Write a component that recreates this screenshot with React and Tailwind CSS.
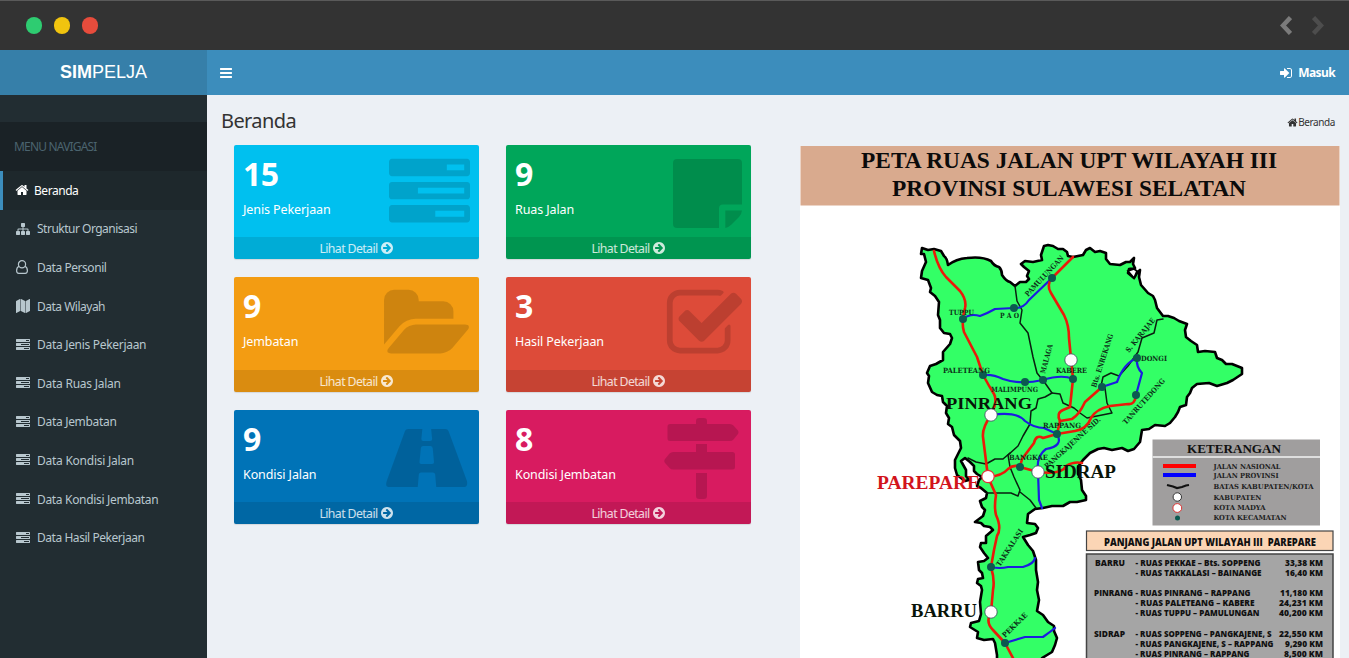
import React from "react";

const P = {
  tasks: "M1024 1408h640v-128h-640v128zm-384-512h1024v-128h-1024v128zm640-512h384v-128h-384v128zm512 832v256q0 26-19 45t-45 19h-1664q-26 0-45-19t-19-45v-256q0-26 19-45t45-19h1664q26 0 45 19t19 45zm0-512v256q0 26-19 45t-45 19h-1664q-26 0-45-19t-19-45v-256q0-26 19-45t45-19h1664q26 0 45 19t19 45zm0-512v256q0 26-19 45t-45 19h-1664q-26 0-45-19t-19-45v-256q0-26 19-45t45-19h1664q26 0 45 19t19 45z",
  home: "M1472 992v480q0 26-19 45t-45 19h-384v-384h-256v384h-384q-26 0-45-19t-19-45v-480q0-1 .5-3t.5-3l575-474 575 474q1 2 1 6zm223-69l-62 74q-8 9-21 11h-3q-13 0-21-7l-692-577-692 577q-12 8-24 7-13-2-21-11l-62-74q-8-10-7-23.5t11-21.5l719-599q32-26 76-26t76 26l244 204v-195q0-14 9-23t23-9h192q14 0 23 9t9 23v408l219 182q10 8 11 21.5t-7 23.5z",
  bars: "M1664 1344v128q0 26-19 45t-45 19h-1408q-26 0-45-19t-19-45v-128q0-26 19-45t45-19h1408q26 0 45 19t19 45zm0-512v128q0 26-19 45t-45 19h-1408q-26 0-45-19t-19-45v-128q0-26 19-45t45-19h1408q26 0 45 19t19 45zm0-512v128q0 26-19 45t-45 19h-1408q-26 0-45-19t-19-45v-128q0-26 19-45t45-19h1408q26 0 45 19t19 45z",
  sitemap: "M1792 1248v320q0 40-28 68t-68 28h-320q-40 0-68-28t-28-68v-320q0-40 28-68t68-28h96v-192h-512v192h96q40 0 68 28t28 68v320q0 40-28 68t-68 28h-320q-40 0-68-28t-28-68v-320q0-40 28-68t68-28h96v-192h-512v192h96q40 0 68 28t28 68v320q0 40-28 68t-68 28h-320q-40 0-68-28t-28-68v-320q0-40 28-68t68-28h96v-192q0-52 38-90t90-38h512v-192h-96q-40 0-68-28t-28-68v-320q0-40 28-68t68-28h320q40 0 68 28t28 68v320q0 40-28 68t-68 28h-96v192h512q52 0 90 38t38 90v192h96q40 0 68 28t28 68z",
  map: "M512 0q13 0 22.5 9.5t9.5 22.5v1472q0 20-17 28l-480 256q-7 4-15 4-13 0-22.5-9.5t-9.5-22.5v-1472q0-20 17-28l480-256q7-4 15-4zm1248 0q13 0 22.5 9.5t9.5 22.5v1472q0 20-17 28l-480 256q-7 4-15 4-13 0-22.5-9.5t-9.5-22.5v-1472q0-20 17-28l480-256q7-4 15-4zm-1120 0q8 0 14 3l512 256q18 10 18 29v1472q0 13-9.5 22.5t-22.5 9.5q-8 0-14-3l-512-256q-18-10-18-29v-1472q0-13 9.5-22.5t22.5-9.5z",
  folder: "M1815 952q0 31-31 66l-336 396q-43 51-120.5 86.5t-143.5 35.5h-1088q-34 0-60.5-13t-26.5-43q0-31 31-66l336-396q43-51 120.5-86.5t143.5-35.5h1088q34 0 60.5 13t26.5 43zm-343-344v160h-832q-94 0-197 47.5t-164 119.5l-337 396-5 6q0-4-.5-12.5t-.5-12.5v-960q0-92 66-158t158-66h320q92 0 158 66t66 158v32h544q92 0 158 66t66 158z",
  check: "M1472 930v318q0 119-84.5 203.5t-203.5 84.5h-832q-119 0-203.5-84.5t-84.5-203.5v-832q0-119 84.5-203.5t203.5-84.5h832q63 0 117 25 15 7 18 23 3 17-9 29l-49 49q-10 10-23 10-3 0-9-2-23-6-45-6h-832q-66 0-113 47t-47 113v832q0 66 47 113t113 47h832q66 0 113-47t47-113v-254q0-13 9-22l64-64q10-10 23-10 6 0 12 3 20 8 20 29zm231-489l-814 814q-24 24-57 24t-57-24l-430-430q-24-24-24-57t24-57l110-110q24-24 57-24t57 24l263 263 647-647q24-24 57-24t57 24l110 110q24 24 24 57t-24 57z",
  arrow: "M1413 896q0-27-18-45l-91-91-362-362q-18-18-45-18t-45 18l-91 91q-18 18-18 45t18 45l189 189h-502q-26 0-45 19t-19 45v128q0 26 19 45t45 19h502l-189 189q-19 19-19 45t19 45l91 91q18 18 45 18t45-18l362-362 91-91q18-18 18-45zm251 0q0 209-103 385.5t-279.5 279.5-385.5 103-385.5-103-279.5-279.5-103-385.5 103-385.5 279.5-279.5 385.5-103 385.5 103 279.5 279.5 103 385.5z",
  signin: "M1312 896q0 26-19 45l-544 544q-19 19-45 19t-45-19-19-45v-288h-448q-26 0-45-19t-19-45v-384q0-26 19-45t45-19h448v-288q0-26 19-45t45-19 45 19l544 544q19 19 19 45zm352-352v704q0 119-84.5 203.5t-203.5 84.5h-320q-13 0-22.5-9.5t-9.5-22.5q0-4-1-20t-.5-26.5 3-23.5 10-19.5 20.5-6.5h320q66 0 113-47t47-113v-704q0-66-47-113t-113-47h-312l-11.5-1-11.5-3-8-5.5-7-9-2-13.5q0-4-1-20t-.5-26.5 3-23.5 10-19.5 20.5-6.5h320q119 0 203.5 84.5t84.5 203.5z",
};

function Icon({ d, className, box = "0 0 1792 1792" }) {
  return (
    <svg viewBox={box} className={className} fill="currentColor">
      <path d={d} />
    </svg>
  );
}

function UserOutline() {
  return (
    <svg viewBox="0 0 13 14" className="h-[14px] w-[13px]" fill="none" stroke="currentColor" strokeWidth="1.2">
      <circle cx="6" cy="4.300" r="3.600" />
      <path d="M3 6.300C1.200 7 .6 8.900 .6 10.800 .6 12.400 1.500 13.300 2.800 13.300h6.400c1.300 0 2.200-.9 2.200-2.500 0-1.900-.6-3.800-2.400-4.500" />
    </svg>
  );
}

const tasks = <Icon d={P.tasks} className="h-[14px] w-[14px]" />;
const menu = [
  ["Struktur Organisasi", <Icon d={P.sitemap} className="h-[14px] w-[14px]" />, "tracking-[-0.5px]"],
  ["Data Personil", <UserOutline />, "tracking-[-0.45px]"],
  ["Data Wilayah", <Icon d={P.map} className="h-[14px] w-[14px]" />, "tracking-[-0.5px]"],
  ["Data Jenis Pekerjaan", tasks, "tracking-[-0.3px]"],
  ["Data Ruas Jalan", tasks, "tracking-[-0.25px]"],
  ["Data Jembatan", tasks, "tracking-[-0.3px]"],
  ["Data Kondisi Jalan", tasks, "tracking-[-0.25px]"],
  ["Data Kondisi Jembatan", tasks, "tracking-[-0.32px]"],
  ["Data Hasil Pekerjaan", tasks, "tracking-[-0.45px]"],
];

const cards = [
  ["15", "Jenis Pekerjaan", "bg-[#00c0ef]", <Icon d={P.tasks} className="h-[81px] w-[81px]" />, "right-[9px] top-[7.5px]"],
  ["9", "Ruas Jalan", "bg-[#00a65a]",
    <svg viewBox="0 0 69 69" className="h-[69px] w-[69px]" fill="currentColor">
      <path d="M4 0H65Q69 0 69 4V45.500H50Q46 45.500 46 49.500V69H4Q0 69 0 65V4Q0 0 4 0Z" />
      <path d="M52.300 51.500H69Q68.500 55.500 66 58L58.500 65.500Q55.500 68.500 52.300 69Z" />
    </svg>, "right-[9px] top-[13.5px]"],
  ["9", "Jembatan", "bg-[#f39c12]", <Icon d={P.folder} box="-64 0 1880 1792" className="h-[81px] w-[85px]" />, "right-[10.5px] top-[7px]"],
  ["3", "Hasil Pekerjaan", "bg-[#dd4b39]", <Icon d={P.check} className="h-[81px] w-[81px]" />, "right-[6px] top-[7px]"],
  ["9", "Kondisi Jalan", "bg-[#0073b7]",
    <svg viewBox="0 0 80 58" preserveAspectRatio="none" className="h-[58px] w-[82px]" fill="currentColor">
      <path fillRule="evenodd" d="M21.500 0H35.500L34.500 10Q34.500 12 36.500 12H43Q45 12 45 10L44 0H58Q60.200 0 61 2L79 52Q80 58 76.500 58H49L48 46Q48 43.500 45.500 43.500H34.500Q32 43.500 32 46L31 58H2.500Q-1 58 .7 52L18.500 2Q19.300 0 21.500 0ZM36 17Q34 17 34 19.500L32.700 33Q32.500 35 34.500 35H45Q47 35 46.800 33L45.600 19.500Q45.400 17 43.500 17Z" />
    </svg>, "right-[11px] top-[19px]"],
  ["8", "Kondisi Jembatan", "bg-[#d81b60]",
    <svg viewBox="0 0 75 81" className="h-[81px] w-[75px]" fill="currentColor">
      <path d="M6 6H32V3Q32 0 35 0H40Q43 0 43 3V6H66Q68 6 69.500 7.500L74 12.500Q75 14.500 74 16L69.500 21.500Q68 23 66 23H6Q3.500 23 3.500 20.500V8.500Q3.500 6 6 6ZM32 26H43V34H68.500Q71 34 71 36.500V49Q71 51.500 68.500 51.500H9Q7 51.500 5.500 50L1 45Q-.5 43 1 41L5.500 35.500Q7 34 9 34H32ZM32 55H43V78Q43 81 40 81H35Q32 81 32 78Z" />
    </svg>, "right-[12px] top-[8px]"],
];

function Card({ c }) {
  return (
    <div className={"relative flex w-[245px] flex-col rounded-[2px] text-white shadow-[0_1px_1px_rgba(0,0,0,0.1)] " + c[2]}>
      <div className={"absolute text-black/15 " + c[4]}>{c[3]}</div>
      <div className="flex-1 pl-[9px] pt-[9px]">
        <div className="text-[32px] font-bold leading-[40px] tracking-[-0.5px]">{c[0]}</div>
        <div className="mt-[7px] text-[12.500px] leading-[18px] tracking-[-0.1px]">{c[1]}</div>
      </div>
      <div className="flex h-[22px] items-center justify-center gap-[2px] rounded-b-[2px] bg-black/10 text-[12.300px] tracking-[-0.6px] text-white/80">
        <span className="pt-[2px]">Lihat Detail</span>
        <Icon d={P.arrow} className="h-[14px] w-[14px]" />
      </div>
    </div>
  );
}

const LAND =
  "M922 248L928 250L934 249L941 251L944 256Q947 258 948 265Q956 259 967 258Q982 256 991 261Q994 266 999 267Q1002 270 1002 275Q1006 281 1010 282L1015 286L1020 282L1026 282L1029 279L1027 276L1029 271L1024 267L1021 264L1025 261L1033 262L1042 260L1041 255L1044 246L1048 245L1053 246L1058 249L1063 249L1067 252L1068 256L1073 257L1083 255L1086 250L1090 248L1095 252L1100 251L1106 253L1106 259L1110 264L1120 265L1126 262L1130 262L1134 258L1133 264L1135 268L1129 269L1128 273L1134 278L1137 273L1140 270L1139 277L1141 285L1148 293L1153 296L1155 300L1157 308L1163 316L1168 316L1174 318L1179 321L1187 324L1185 330L1186 337L1191 341L1197 345L1198 352L1205 351L1215 352L1217 358L1222 360L1226 364L1232 364L1242 368L1242 374L1233 380L1227 383L1217 386L1209 383L1197 384L1192 388L1190 393L1187 397L1186 405L1180 407L1178 412L1175 417L1170 423L1165 426L1155 425L1149 429L1142 430L1140 442L1134 449L1128 451L1122 448L1112 450L1104 448L1098 449L1090 453L1083 460L1078 467L1078 474L1081 480L1082 490L1086 496L1086 500L1077 502L1070 502L1063 506L1052 506L1043 508L1035 509L1028 514L1027 523L1035 524L1038 528L1036 533L1030 535L1023 537L1028 545L1033 551L1036 560L1036 570L1038 582L1037 590L1039 600L1037 611L1043 615L1048 622L1054 626L1054 631L1057 638L1055 645L1052 652L1042 658L1042 664H997L997 655L995 643L993 639L984 640L977 638L978 632L970 627L971 623L979 621L981 614L980 602L982 590L981 586L977 583L978 579L983 578L982 573L979 570L978 562L984 561L988 558L984 553L980 547L981 543L986 543L986 536L993 530L990 527L984 526L981 523L975 522L983 516L985 510L982 507L980 501L986 498L987 493L981 488L977 486L979 480L982 477L977 474L974 471L974 466L970 462L965 458L961 461L966 470L966 476L969 480L965 481L957 475L955 468L955 460L961 448L960 441L954 435L952 427L948 424L949 418L946 413L947 406L943 402L942 396L937 395L932 392L928 383L929 376L927 373L930 366L936 364L943 360L943 352L950 344L952 338L950 334L944 333L940 328L940 320L938 315L939 302L935 296L930 292L931 288L928 280L921 278L922 271L926 262L924 254L921 254Z";

const THIN = [
  "M1015 286L1017 301L1022 310L1020 323L1028 333L1033 357L1037 373L1045 383L1052 393L1045 397L1038 399L1036 408L1031 411L1030 424L1023 436L1018 446L1008 455L1010 467",
  "M1052 393L1060 394L1063 403L1074 408L1080 413L1087 418L1102 415L1112 413L1107 403L1105 388",
  "M968 458L976 462L986 464L995 459L1003 459L1010 453M1010 467L1014 477L1020 490L1018 496L1011 493L987 493M1020 492L1030 500L1036 508",
  "M1163 319L1157 320L1154 333L1142 338L1138 352L1128 366L1119 376L1111 373L1103 377L1101 386",
];
const RED = [
  "M934 251Q938 268 946 277L960 291Q967 300 965 308Q961 322 964 332L977 357L983 375Q989 386 994 394Q998 401 991 415Q982 428 983 437L988 477L996 495Q994 507 996 515Q1002 528 997 536L994 550L991 567Q995 580 993 590L991 612Q985 622 993 630L1005 643L1013 658",
  "M1073 257L1052 278Q1046 285 1051 293L1064 315Q1069 325 1069 338L1073 379L1070 407L1063 410Q1056 413 1060 421L1057 434",
  "M1102 387L1085 402Q1079 415 1072 419L1060 421",
  "M1136 395Q1135 405 1128 404L1110 406Q1096 409 1091 418Q1087 429 1075 431L1057 434L1043 438Q1036 434 1034 443L1022 459L1020 467",
  "M988 477Q1002 476 1008 469Q1014 464 1020 467L1038 472Q1062 475 1066 466Q1074 461 1082 463",
];
const BLUE = [
  "M963 319Q970 313 980 316Q988 313 995 309L1014 308Q1023 309 1029 300L1052 278",
  "M983 375Q993 374 1003 379Q1020 385 1043 380Q1062 374 1073 379",
  "M991 415Q1017 411 1025 421Q1034 428 1044 428L1057 434Q1064 446 1046 449Q1036 456 1038 472L1039 500L1042 508",
  "M1102 387L1117 382Q1124 363 1137 358Q1136 367 1142 373L1136 395",
  "M991 567Q1000 569 1008 567L1023 567Q1034 564 1035 558",
  "M1005 643L1025 637L1043 637Q1050 632 1055 628",
];
const TOWNS = [[963, 319], [1014, 308], [1052, 278], [983, 375], [1025, 382], [1043, 380], [1073, 379], [1102, 387], [1137, 358], [1136, 395], [1057, 434], [1020, 467], [991, 567], [1005, 643]];
const CITIES = [[991, 415], [1071, 360], [1038, 472], [991, 612]];
// text, x, y, width, size, rotation
const LABELS = [
  ["TUPPU", 949, 315, 25, 7.2, 0], ["P A O", 1000, 317.5, 19, 7.2, 0], ["PALETEANG", 943, 373, 47, 7.2, 0],
  ["MALIMPUNG", 991, 392, 47, 7.2, 0], ["KABERE", 1056, 372.5, 31, 7.2, 0], ["DONGI", 1141, 361, 26, 7.2, 0],
  ["RAPPANG", 1043, 428, 38, 7.2, 0], ["BANGKAE", 1009, 460, 39, 7.2, 0],
  ["PAMULUNGAN", 1028, 297, 53, 7.2, -47], ["MALAGA", 1045, 374, 30, 7.2, -75],
  ["Bts. ENREKANG", 1096, 388, 56, 7.2, -72], ["S. KARAJAE", 1129, 353, 42, 7.2, -51],
  ["TANRUTEDONG", 1126, 425, 59, 7.2, -48], ["PANGKAJENNE SID.", 1047, 469, 73, 7.2, -42],
  ["TAKKALASI", 1000, 567, 43, 7.2, -57], ["PEKKAE", 1005, 638, 32, 7.2, -44],
];
const LEGEND = [["JALAN NASIONAL", 468.5, 67], ["JALAN PROVINSI", 477.5, 65], ["BATAS KABUPATEN/KOTA", 488.5, 100], ["KABUPATEN", 499.5, 48], ["KOTA MADYA", 509.5, 52], ["KOTA KECAMATAN", 519.5, 73]];
const ROWS = [
  ["- RUAS PEKKAE – Bts. SOPPENG", 565.5, 125, "33,38 KM", 38], ["- RUAS TAKKALASI – BAINANGE", 576, 126, "16,40 KM", 38],
  ["- RUAS PINRANG – RAPPANG", 596, 115, "11,180 KM", 43], ["- RUAS PALETEANG – KABERE", 606, 119, "24,231 KM", 44], ["- RUAS TUPPU – PAMULUNGAN", 616, 124, "40,200 KM", 44],
  ["- RUAS SOPPENG – PANGKAJENE, S", 636.5, 136, "22,550 KM", 44], ["- RUAS PANGKAJENE, S – RAPPANG", 646.5, 138, "9,290 KM", 38], ["- RUAS PINRANG – RAPPANG", 656.5, 114, "8,500 KM", 39],
];

function T({ x, y, w, s, children, ...rest }) {
  return <text x={x} y={y} fontSize={s} textLength={w} lengthAdjust="spacingAndGlyphs" fontWeight="700" {...rest}>{children}</text>;
}

function RoadMap() {
  return (
    <svg viewBox="800 146 540 512" className="block h-[512px] w-[540px] bg-white font-['Liberation_Serif',serif]">
      <rect x="800.500" y="146" width="539" height="59.500" fill="#d9aa8e" />
      <T x="861" y="168" w="416" s="23" fill="#0b0b0b">PETA RUAS JALAN UPT WILAYAH III</T>
      <T x="892" y="196" w="354" s="23" fill="#0b0b0b">PROVINSI SULAWESI SELATAN</T>
      <path d={LAND} fill="#33ff66" stroke="#000" strokeWidth="2.600" strokeLinejoin="round" />
      <path d="M1128 271L1134 269L1137 271L1134 278Z" fill="#fff" stroke="#000" strokeWidth="1.800" />
      <g fill="none" strokeLinejoin="round" strokeLinecap="round">
        <g stroke="#0a1f10" strokeWidth="1.500">{THIN.map((d) => <path key={d} d={d} />)}</g>
        <g stroke="#1c1ce0" strokeWidth="2.200">{BLUE.map((d) => <path key={d} d={d} />)}</g>
        <g stroke="#ea1a0a" strokeWidth="2.600">{RED.map((d) => <path key={d} d={d} />)}</g>
      </g>
      {TOWNS.map(([x, y]) => <circle key={x + "-" + y} cx={x} cy={y} r="4" fill="#0b5a50" />)}
      <g fill="#0b3318" fontFamily="'DejaVu Serif', serif">
        {LABELS.map(([t, x, y, w, s, r]) => (
          <T key={t} x={x} y={y} w={w} s={s} transform={`rotate(${r} ${x} ${y})`}>{t}</T>
        ))}
      </g>
      <g fill="#081408">
        <T x="946" y="409" w="86" s="17.500">PINRANG</T>
        <T x="1045" y="478" w="71" s="18">SIDRAP</T>
        <T x="911" y="617" w="66" s="18">BARRU</T>
      </g>
      <T x="877" y="489" w="103" s="18" fill="#d2141c">PAREPARE</T>
      {CITIES.map(([x, y]) => <circle key={y} cx={x} cy={y} r="6.200" fill="#fff" stroke="#345" strokeWidth=".8" />)}
      <circle cx="988" cy="476.500" r="6.200" fill="#fff" stroke="#e0343a" strokeWidth="1.200" />

      <rect x="1152.500" y="439.500" width="167.500" height="86" fill="#a09e9e" />
      <rect x="1152.500" y="456" width="167.500" height="2" fill="#dedede" />
      <T x="1187" y="453" w="94" s="13.300" fill="#111">KETERANGAN</T>
      <path d="M1163 466H1196" stroke="#f00" strokeWidth="4" />
      <path d="M1163 475H1196" stroke="#00f" strokeWidth="4" />
      <path d="M1167 485L1173 486.500L1177 488L1182 487L1186 485.500L1189 485" fill="none" stroke="#111" strokeWidth="2.200" />
      <circle cx="1177.300" cy="497" r="4.200" fill="#fff" stroke="#222" strokeWidth=".9" />
      <circle cx="1177.300" cy="508" r="4.400" fill="#fff" stroke="#d33" strokeWidth="1" />
      <circle cx="1177.500" cy="518" r="2.500" fill="#0b5a50" />
      <g fontFamily="'DejaVu Serif', serif">
        {LEGEND.map(([t, y, w]) => <T key={t} x="1213.500" y={y} w={w} s="7" fill="#222">{t}</T>)}
      </g>

      <rect x="1086.500" y="531" width="246.500" height="19.500" fill="#fbd5b5" stroke="#444" strokeWidth="1.200" />
      <g fontFamily="'Open Sans', sans-serif" fill="#111">
        <T x="1104" y="545.500" w="212" s="10.500" fontWeight="800">PANJANG JALAN UPT WILAYAH III&#160; PAREPARE</T>
        <rect x="1086.500" y="554" width="246.500" height="110" fill="#a5a5a5" stroke="#444" strokeWidth="1.500" />
        <T x="1095" y="565.500" w="30" s="7.800" fontWeight="800">BARRU</T>
        <T x="1094" y="596" w="39" s="7.800" fontWeight="800">PINRANG</T>
        <T x="1094" y="636.500" w="31" s="7.800" fontWeight="800">SIDRAP</T>
        {ROWS.map(([t, y, w, k, kw]) => (
          <React.Fragment key={y}>
            <T x="1135.500" y={y} w={w} s="7.800" fontWeight="800">{t}</T>
            <T x={1323 - kw} y={y} w={kw} s="7.800" fontWeight="800">{k}</T>
          </React.Fragment>
        ))}
      </g>
    </svg>
  );
}

export default function App() {
  return (
    <div className="flex h-[658px] w-[1349px] flex-col overflow-hidden bg-[#ecf0f5] font-['Noto_Sans',sans-serif]">
      <header className="flex h-[50px] shrink-0 items-center justify-between border-t border-[#5a5a5a] bg-[#333333] pl-[26px] pr-[25px]">
        <div className="flex gap-[11.400px]">
          <span className="h-[16.400px] w-[16.400px] rounded-full bg-[#2ecc71]" />
          <span className="h-[16.400px] w-[16.400px] rounded-full bg-[#f1c40f]" />
          <span className="h-[16.400px] w-[16.400px] rounded-full bg-[#e74c3c]" />
        </div>
        <div className="flex gap-[20px]">
          <svg viewBox="0 0 12 19" className="h-[19px] w-[12px]" fill="none" stroke="#7b7b7b" strokeWidth="4.500"><path d="M10.500 1.500L3 9.500L10.500 17.500" /></svg>
          <svg viewBox="0 0 12 19" className="h-[19px] w-[12px]" fill="none" stroke="#4d4d4d" strokeWidth="4.500"><path d="M1.500 1.500L9 9.500L1.500 17.500" /></svg>
        </div>
      </header>

      <nav className="flex h-[45px] shrink-0 text-white">
        <div className="flex w-[207px] items-center justify-center bg-[#367fa9] font-['Liberation_Sans',sans-serif] text-[18px]">
          <b>SIM</b><span>PELJA</span>
        </div>
        <div className="flex flex-1 items-center justify-between bg-[#3c8dbc] pl-[12px] pr-[14px]">
          <Icon d={P.bars} className="h-[14px] w-[14px]" />
          <div className="flex items-center gap-[5px]">
            <Icon d={P.signin} className="h-[14px] w-[14px]" />
            <span className="text-[12px] font-bold tracking-[-0.6px]">Masuk</span>
          </div>
        </div>
      </nav>

      <div className="flex min-h-0 flex-1">
        <aside className="w-[207px] shrink-0 bg-[#222d32] pt-[27px] text-[12px] text-[#b8c7ce]">
          <div className="flex h-[49px] items-center bg-[#1a2226] pl-[14px] text-[12px] tracking-[-0.82px] text-[#4b646f]">MENU NAVIGASI</div>
          <div className="flex h-[38.600px] items-center gap-[5px] border-l-[3px] border-[#3c8dbc] bg-[#1e282c] pl-[12px] tracking-[-0.45px] text-white">
            <Icon d={P.home} className="h-[14px] w-[14px]" />
            <span className="pt-[2px]">Beranda</span>
          </div>
          {menu.map(([t, icon, track]) => (
            <div key={t} className={"flex h-[38.600px] items-center gap-[7px] pl-[16px] " + track}>
              <span className="flex w-[14px]">{icon}</span>
              <span className="pt-px">{t}</span>
            </div>
          ))}
        </aside>

        <main className="flex min-w-0 flex-1 flex-col">
          <div className="flex h-[50px] items-center justify-between pl-[14px] pr-[14px] text-[#333]">
            <h1 className="pt-[2px] text-[20px] tracking-[-0.6px]">Beranda</h1>
            <div className="flex items-center pt-[5px]">
              <Icon d={P.home} className="h-[11px] w-[11px]" />
              <span className="text-[10px] tracking-[-0.4px]">Beranda</span>
            </div>
          </div>
          <div className="flex">
            <div className="grid shrink-0 grid-cols-[245px_245px] grid-rows-[114px_115px_114px] content-start gap-x-[27px] gap-y-[18px] pl-[27px]">
              {cards.map((c) => <Card key={c[1]} c={c} />)}
            </div>
            <div className="ml-[49px] pt-px"><RoadMap /></div>
          </div>
        </main>
      </div>
    </div>
  );
}
